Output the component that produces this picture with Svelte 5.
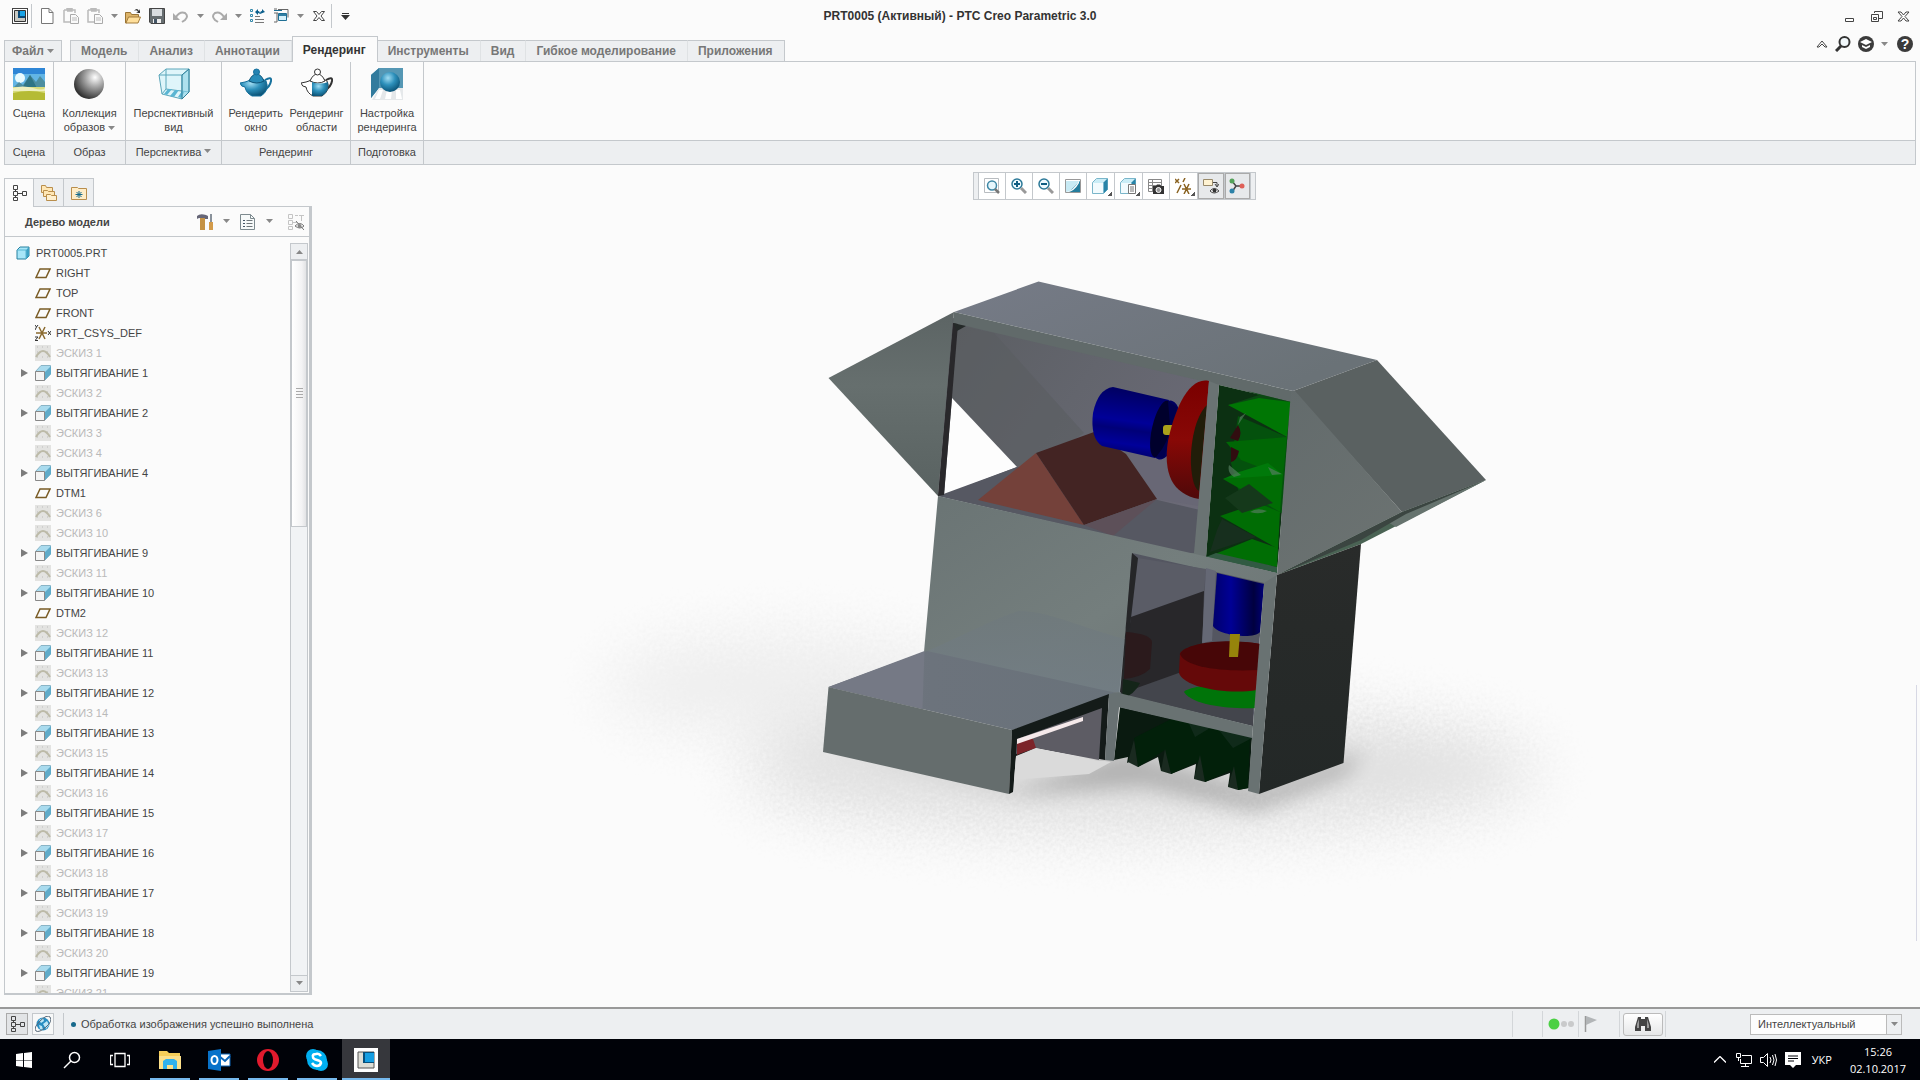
<script>
  const tabs = ['Модель', 'Анализ', 'Аннотации', 'Рендеринг', 'Инструменты', 'Вид', 'Гибкое моделирование', 'Приложения'];
  let activeTab = 'Рендеринг';

  const quick = ['new', 'paste', 'paste', 'caret', 'open', 'save', 'undo', 'caret', 'redo', 'caret', 'regen', 'windows', 'caret', 'closeall'];

  const groups = [
    { id: 'scene', title: 'Сцена', items: [{ icon: 'scene', lines: ['Сцена'] }] },
    { id: 'look', title: 'Образ', items: [{ icon: 'sphere', lines: ['Коллекция', 'образов'], menu: true }] },
    { id: 'persp', title: 'Перспектива', menu: true, items: [{ icon: 'persp', lines: ['Перспективный', 'вид'] }] },
    { id: 'render', title: 'Рендеринг', items: [{ icon: 'teapot', lines: ['Рендерить', 'окно'] }, { icon: 'teapotArea', lines: ['Рендеринг', 'области'] }] },
    { id: 'setup', title: 'Подготовка', items: [{ icon: 'setup', lines: ['Настройка', 'рендеринга'] }] }
  ];

  const viewTools = ['refit', 'zoomin', 'zoomout', 'repaint', 'style', 'saved', 'viewmgr', 'datum', 'annot', 'spin'];

  const sketch = (n) => ({ type: 'sketch', name: 'ЭСКИЗ ' + n });
  const extrude = (n) => ({ type: 'extrude', name: 'ВЫТЯГИВАНИЕ ' + n });
  const plane = (name) => ({ type: 'plane', name });

  const tree = [
    { type: 'part', name: 'PRT0005.PRT' },
    plane('RIGHT'), plane('TOP'), plane('FRONT'),
    { type: 'csys', name: 'PRT_CSYS_DEF' },
    sketch(1), extrude(1), sketch(2), extrude(2), sketch(3), sketch(4), extrude(4),
    plane('DTM1'),
    sketch(6), sketch(10), extrude(9), sketch(11), extrude(10),
    plane('DTM2'),
    sketch(12), extrude(11), sketch(13), extrude(12), sketch(14), extrude(13), sketch(15), extrude(14),
    sketch(16), extrude(15), sketch(17), extrude(16), sketch(18), extrude(17), sketch(19), extrude(18),
    sketch(20), extrude(19), sketch(21)
  ];

  const taskApps = ['explorer', 'outlook', 'opera', 'skype', 'creo'];
</script>

{#snippet icon(name, size = 16)}
  <svg class="icon" width={size} height={size} viewBox="0 0 {size} {size}" aria-hidden="true">
    {#if name === 'creo'}
      <rect x=".5" y=".5" width="15" height="15" fill="#fff" stroke="#444" />
      <path d="M2.500 2.500h11v11h-11z" fill="#c9c9c3" stroke="#333" />
      <path d="M6 3h7v7H6z" fill="#0a4a78" /><path d="M8 3h5v5H8z" fill="#19a3e6" />
    {:else if name === 'new'}
      <path d="M2.500.5h7.500l4 4v11h-11.500z" fill="#fff" stroke="#777" /><path d="M10 .5v4h4" fill="none" stroke="#777" />
    {:else if name === 'paste'}
      <path d="M1 2h11v3M1 2v12h6M4 2V.5h5V3H4" fill="none" stroke="#bbb" stroke-width="1.500" />
      <path d="M7.500 6.500h5l3 3v6h-8z" fill="#fafafa" stroke="#aaa" /><path d="M9 10h5M9 12h5" stroke="#bbb" />
    {:else if name === 'open'}
      <path d="M.5 4.500h5l1 2h7v3H5L1.500 15h-1z" fill="#ddb469" stroke="#9a7434" />
      <path d="M3.500 9h12l-2.500 6H1z" fill="#ffdf9b" stroke="#a37c3c" /><path d="M9 3q3-4 5 0l1-2v4h-4l2-1q-1-3-4-1z" fill="#333" />
    {:else if name === 'save'}
      <path d="M.5.5h15v15H2l-1.500-1.500z" fill="#666d70" stroke="#444" />
      <path d="M3 1h10v7H3z" fill="#d9dde0" /><path d="M4 11h8v4H4z" fill="#eee" /><path d="M5 11h3v4H5z" fill="#456" />
    {:else if name === 'undo'}
      <path d="M3 9q4-6 9-4 4 3 0 7l-3 2" fill="none" stroke="#aaa" stroke-width="2" /><path d="M0 5v7h7z" fill="#aaa" />
    {:else if name === 'redo'}
      <path d="M13 9Q9 3 4 5q-4 3 0 7l3 2" fill="none" stroke="#aaa" stroke-width="2" /><path d="M16 5v7H9z" fill="#aaa" />
    {:else if name === 'regen'}
      <path d="M1.500 1.500h2v2h-2zM1.500 6.500h2v2h-2zM1.500 11.500h2v2h-2z" fill="none" stroke="#38a" />
      <path d="M6 8.500h5M6 11.500h9M6 14.500h9" stroke="#777" /><path d="M6 4l3-3v2q2 0 2 3-1-1-2-1v2zM16 4l-3-3v2q-2 0-2 3z" fill="#0c5f8c" />
    {:else if name === 'windows'}
      <path d="M5 1.500h10v8M1 5h4M1 1h3M1 14h3V5" fill="none" stroke="#666" /><path d="M1 2.500h8M5.500 5.500h8v7h-8z" fill="#d5f1fb" stroke="#1f6f94" /><path d="M6 6h7v2H6z" fill="#2f7fa4" />
    {:else if name === 'closeall'}
      <path d="M2.500 3.500h3l2.500 3 2.500-3h3L10 8l3.500 4.500h-3L8 9.500l-2.500 3h-3L6 8z" fill="#fff" stroke="#444" />
    {:else if name === 'scene'}
      <rect width="32" height="32" fill="#62b5e5" /><path d="M0 0h32v6H0z" fill="#2e86d6" />
      <circle cx="7" cy="10" r="5" fill="#e9fbff" /><path d="M0 20l6-6 4 3 7-10 6 7 4-6 5 6v9H0z" fill="#4d8ea0" /><path d="M8 22l9-15 8 15z" fill="#2f7585" />
      <path d="M0 19h32v7H0z" fill="#d8dc7c" /><path d="M0 20q10-3 20 0t12 0v3H0z" fill="#eef0c0" /><path d="M0 25q16-4 32 0v7H0z" fill="#b5bb34" />
    {:else if name === 'sphere'}
      <circle cx="16" cy="16" r="15" fill="url(#greyBall)" />
    {:else if name === 'persp'}
      <path d="M1 7L8 1h23v23l-7 7L4 26z" fill="#dff5fa" stroke="#5ba6ba" />
      <path d="M1 7h23l7-6M24 7v24M8 1v20l-4 5M8 21l23 3" fill="none" stroke="#5ba6ba" />
      <path d="M10 21l-4 5 3 1 5-6zM17 22l-5 6 4 1 5-7zM24 23l-4 6 3 1 4-7z" fill="#5ab5d3" />
      <path d="M24 7l7-6v23l-7 7z" fill="#8ed3e6" fill-opacity=".6" stroke="#2f7f99" />
    {:else if name === 'teapot' || name === 'teapotArea'}
      <path d="M25 12q7-4 6 1-1 6-7 9" fill="none" stroke={name === 'teapot' ? '#16719d' : '#333'} stroke-width="2" />
      <path d="M8 13q9-6 18 0 4 9-5 15h-9Q6 25 5 19q-4 0-5-4 6-1 8-2z" fill={name === 'teapot' ? 'url(#blueBall)' : '#fff'} stroke={name === 'teapot' ? '#16719d' : '#333'} />
      <path d="M9 13q3-7 7.500-7t7.500 7q-7 4-15 0z" fill={name === 'teapot' ? '#298cb8' : '#fff'} stroke={name === 'teapot' ? '#0e5478' : '#333'} />
      {#if name === 'teapotArea'}<path d="M11 14q8 3 16 0 2 9-6 14h-10z" fill="url(#blueBall)" />{/if}
      <circle cx="16.500" cy="4" r="3" fill={name === 'teapot' ? '#2583b2' : '#fff'} stroke={name === 'teapot' ? '#16719d' : '#333'} />
    {:else if name === 'setup'}
      <path d="M0 7l8-7h24v20H8L0 30z" fill="#5597b4" /><path d="M0 7l8-7v20L0 30z" fill="#327b9d" />
      <path d="M8 20h24v12H1z" fill="#e5e8ea" /><path d="M8 22l-4 9h5l3-9zM16 22l-2 9h6l1-9zM25 22v9h6l-2-9z" fill="#fff" />
      <circle cx="19" cy="14" r="10" fill="url(#blueBall)" />
    {:else if name === 'tree'}
      <path d="M2.500.5h4v4h-4zM2.500 6.500h4v4h-4zM2.500 12.500h4v3h-4zM11.500 6.500h4v4h-4zM7 8.500h4M4.500 5v1M4.500 11v1" fill="none" stroke="#444" />
    {:else if name === 'folders'}
      <path d="M.5.5h4l1 2h6v5H.5z" fill="#ffe7b5" stroke="#b98e4c" /><path d="M2.500 5.500h4l1 1h6v5h-11z" fill="#ffe7b5" stroke="#b98e4c" /><path d="M5.500 9.500h4l1 1h5v5h-10z" fill="#fff0cf" stroke="#b98e4c" />
    {:else if name === 'favorites'}
      <path d="M.5 2.500h6l1 1h8v11H.5z" fill="#ffedc7" stroke="#b98e4c" /><path d="M8 6v7M4.500 9.500h7M5.500 7l5 5M10.500 7l-5 5" stroke="#146a8c" />
    {:else if name === 'tools'}
      <path d="M0 2q3-3 9-1l2 1v3H8L7 4H3q-2 0-3 1z" fill="#667" /><path d="M3 4h5v12H3z" fill="#c59244" /><path d="M13 0h2v8h-2z" fill="#89919a" /><path d="M12 8h4v8h-4z" fill="#d39b4a" />
    {:else if name === 'list'}
      <path d="M.5.5h10l4 4v11H.5z" fill="#f7fafa" stroke="#7d8a8f" /><path d="M10.500.5v4h4" fill="none" stroke="#7d8a8f" />
      <path d="M3 6h2v1H3zM3 9h2v1H3zM3 12h2v1H3z" fill="#456" /><path d="M6.500 6.500h6M6.500 9.500h6M6.500 12.500h6" stroke="#70787c" />
    {:else if name === 'hide'}
      <path d="M.5.5h4v4h-4zM.5 6.500h4v4h-4zM.5 12.500h4v3h-4zM5 8.500h4M7 1.500h3M11 1.500h5M13.500 1v6" fill="none" stroke="#c4c4c4" />
      <path d="M7 12q5-5 9 0-4 4-9 0M8 7l8 9" fill="none" stroke="#777" /><circle cx="11.500" cy="12" r="2" fill="#888" />
    {:else if name === 'part'}
      <path d="M2 5l3-3h9v9l-3 3H2z" fill="#a7e6f8" stroke="#26809f" /><path d="M11 5l3-3v9l-3 3z" fill="#3ca1c4" /><path d="M2 5h9v9" fill="none" stroke="#57b5d2" />
    {:else if name === 'plane'}
      <path d="M1 12.500L5 4h10l-4 8.500z" fill="none" stroke="#7a5c26" stroke-width="1.500" />
    {:else if name === 'csys'}
      <path d="M1 8h11M4 14L10 2M4 2l6 12" stroke="#8a6a2f" stroke-width="1.500" /><path d="M0 0l1.500 2L3 0M1.500 2L0 5M13 6l3 4M16 6l-3 4M0 12h3l-3 3.500h3" fill="none" stroke="#333" />
    {:else if name === 'sketch'}
      <path d="M0 0h16v16H0z" fill="#e3e3e1" /><path d="M2 2h1M7 2h1M12 2h1M2 7h1M12 7h1M2 12h1M7 12h1M12 12h1" stroke="#bbb" /><path d="M1 12q7-12 14 0" fill="none" stroke="#bcbaa8" stroke-width="2" />
    {:else if name === 'extrude'}
      <path d="M.5 6.500L6 .5h9.500V9l-6 6.500z" fill="#a9dbee" stroke="#8ab4c6" /><path d="M10 7l6-6v8l-6 6z" fill="#5fabc9" /><path d="M.5 6.500h9v9h-9z" fill="#f4f4f4" stroke="#888" />
    {:else if name === 'refit'}
      <path d="M.5.5h14v14H.5z" fill="#fff" stroke="#b8bcc0" /><circle cx="8" cy="7.500" r="4.500" fill="#e6f6fc" stroke="#3d87a5" stroke-width="1.500" /><path d="M11 11l4 4" stroke="#777" stroke-width="2.500" />
    {:else if name === 'zoomin' || name === 'zoomout'}
      <circle cx="6" cy="6" r="5" fill="#eefaff" stroke="#2c7998" stroke-width="1.500" /><path d="M10 10l5 5" stroke="#999" stroke-width="3" /><path d="M3 6h6" stroke="#0e5d82" stroke-width="2" />
      {#if name === 'zoomin'}<path d="M6 3v6" stroke="#0e5d82" stroke-width="2" />{/if}
    {:else if name === 'repaint'}
      <path d="M.5 1.500h15v13H.5z" fill="#fff" stroke="#999" /><path d="M1 3h14v11H1z" fill="#c8eaf4" /><path d="M15 3v11H4z" fill="#257d9d" /><path d="M1 14Q8 13 14 3v2Q9 14 2 14z" fill="#fff" />
    {:else if name === 'style' || name === 'saved'}
      <path d="M.5 4.500l4-4h11v11l-4 4H.5z" fill="#caedf7" stroke="#7ab6ca" /><path d="M11.500 4.500l4-4v11l-4 4z" fill="#2884a8" /><path d="M1 5h10v10H1z" fill="#f2fbfe" />
      {#if name === 'saved'}<path d="M8.500 6.500h7v9h-7z" fill="#fff" stroke="#777" /><path d="M10 9h4M10 11h4M10 13h4" stroke="#777" />{/if}
    {:else if name === 'viewmgr'}
      <path d="M.5 1.500h13v12H.5zM.5 4.500h13M.5 7.500h13M.5 10.500h13M4.500 1.500v12" fill="#fff" stroke="#888" /><path d="M5 8h3l1-1.500h3L13 8h3v8H5z" fill="#333" /><circle cx="10.500" cy="12" r="2.500" fill="#999" stroke="#fff" />
    {:else if name === 'datum'}
      <path d="M0 1l4 4M4 1L0 5M10 0L8 4M6 7l-4 8M7 11h9M14 6l-5 10M9 6l5 10" stroke="#8a6322" stroke-width="1.500" />
    {:else if name === 'annot'}
      <path d="M.5 1.500h9v6h-9z" fill="#fff3d2" stroke="#998a6a" /><path d="M10 4.500h4V8M12 6l2 3 2-3" fill="none" stroke="#444" /><path d="M7 13q4-5 9 0-5 4-9 0z" fill="#fff" stroke="#444" /><circle cx="11.500" cy="12.500" r="2" fill="#333" />
    {:else if name === 'spin'}
      <path d="M3 3l4 5-4 6M7 8h6" fill="none" stroke="#444" stroke-width="1.500" /><circle cx="3" cy="3" r="2.500" fill="#54a259" /><circle cx="3" cy="13" r="2.500" fill="#2c82a8" /><circle cx="13" cy="8" r="2.500" fill="#df6058" />
    {:else if name === 'globe'}
      <circle cx="8" cy="8" r="6.500" fill="#278dc2" /><path d="M4 4l4-2 1 3-3 2zM8 8l4-3 2 4-3 4zM4 9l3 1 1 4-3-1z" fill="#bee7f7" /><path d="M1 15Q-2 12 5 5T15 1q3 4-4 10T1 15" fill="none" stroke="#567" />
    {:else if name === 'flag'}
      <path d="M1.500 0v16" stroke="#999" stroke-width="1.500" /><path d="M2 0l11 4-11 5z" fill="#b2b5b7" />
    {:else if name === 'find'}
      <path d="M3 1h3v2h4V1h3l3 10v4h-6v-5H6v5H0v-4z" fill="#444" /><path d="M2 8l2-5v9H2zM12 3l2 6v3h-2z" fill="#999" />
    {/if}
  </svg>
{/snippet}

{#snippet caret()}
  <svg class="caret" width="7" height="5" viewBox="0 0 7 5" aria-hidden="true"><path d="M0 0h7L3.500 4z" /></svg>
{/snippet}

<!-- gradients shared by the ribbon icons -->
<svg class="defs" width="0" height="0" aria-hidden="true">
  <defs>
    <radialGradient id="greyBall" cx=".7" cy=".28" r=".75"><stop offset="0" stop-color="#fff" /><stop offset=".4" stop-color="#aaa" /><stop offset="1" stop-color="#333" /></radialGradient>
    <radialGradient id="blueBall" cx=".4" cy=".3" r=".7"><stop offset="0" stop-color="#a0dcf2" /><stop offset=".5" stop-color="#2d90bb" /><stop offset="1" stop-color="#0d5579" /></radialGradient>
  </defs>
</svg>

<div class="app">
  <header class="titlebar">
    <div class="quick">
      <button class="tool logo" aria-label="Creo">{@render icon('creo')}</button>
      {#each quick as name}
        {#if name === 'caret'}
          <button class="drop" aria-label="Меню">{@render caret()}</button>
        {:else}
          <button class="tool" aria-label={name}>{@render icon(name)}</button>
        {/if}
      {/each}
      <button class="drop customize" aria-label="Настроить">
        <svg width="9" height="7" viewBox="0 0 9 7"><path d="M1 0h7v1H1zM0 2h9L4.500 7z" fill="#333" /></svg>
      </button>
    </div>
    <h1>PRT0005 (Активный) - PTC Creo Parametric 3.0</h1>
    <div class="window-buttons">
      <button aria-label="Свернуть"><svg width="13" height="13"><path d="M2.500 8.500h8v3h-8z" fill="#fff" stroke="#444" /></svg></button>
      <button aria-label="Развернуть"><svg width="13" height="13"><path d="M4.500 3V1.500h8v7H9M1.500 4.500h7v7h-7zM3.500 7.500h3v2h-3z" fill="none" stroke="#444" /></svg></button>
      <button aria-label="Закрыть"><svg width="13" height="13"><path d="M1 2h3l2.500 3L9 2h3L8 6.500l4 4.500H9L6.500 8 4 11H1l4-4.500z" fill="#fff" stroke="#444" /></svg></button>
    </div>
  </header>

  <nav class="tabbar">
    <button class="tab file">Файл {@render caret()}</button>
    <div class="tabs">
      {#each tabs as tab}
        <button class="tab" class:active={tab === activeTab} on:click={() => (activeTab = tab)}>{tab}</button>
      {/each}
    </div>
    <div class="help">
      <button aria-label="Свернуть ленту"><svg width="12" height="8"><path d="M1 7l5-6 5 6H9L6 4 3 7z" fill="#fff" stroke="#444" /></svg></button>
      <button aria-label="Поиск"><svg width="16" height="16"><circle cx="9.500" cy="6" r="5" fill="#f2f8fb" stroke="#333" stroke-width="2" /><path d="M6 10l-5 5" stroke="#333" stroke-width="3" /></svg></button>
      <button aria-label="Обучение"><svg width="16" height="16"><circle cx="8" cy="8" r="8" fill="#3b3b3b" /><path d="M2 6l6-3 6 3-6 3zM4 9l4 2 4-2v2l-4 2-4-2z" fill="#fff" /></svg></button>
      <button aria-label="Меню обучения">{@render caret()}</button>
      <button class="question" aria-label="Справка">?</button>
    </div>
  </nav>

  <section class="ribbon">
    {#each groups as group}
      <div class="group {group.id}">
        <div class="group-body">
          {#each group.items as item}
            <button class="command">
              {@render icon(item.icon, 32)}
              <span class="label">
                {#each item.lines as line, i}
                  <span>{line}{#if item.menu && i === 1}&nbsp;{@render caret()}{/if}</span>
                {/each}
              </span>
            </button>
          {/each}
        </div>
        <div class="group-title">{group.title}{#if group.menu}&nbsp;{@render caret()}{/if}</div>
      </div>
    {/each}
    <div class="group rest"><div class="group-body"></div><div class="group-title"></div></div>
  </section>

  <main>
    <aside>
      <div class="panel-tabs">
        <button class="active" aria-label="Дерево модели">{@render icon('tree')}</button>
        <button aria-label="Папки">{@render icon('folders')}</button>
        <button aria-label="Избранное">{@render icon('favorites')}</button>
        <span></span>
      </div>
      <div class="panel">
        <div class="panel-head">
          <h2>Дерево модели</h2>
          <button aria-label="Настройки">{@render icon('tools')}{@render caret()}</button>
          <button aria-label="Показать">{@render icon('list')}{@render caret()}</button>
          <button class="hide" aria-label="Скрыть">{@render icon('hide')}</button>
        </div>
        <div class="tree">
          <ul>
            {#each tree as node}
              <li class={node.type}>
                {#if node.type === 'extrude'}
                  <button class="expand" aria-label="Развернуть"><svg width="7" height="8"><path d="M0 0l7 4-7 4z" fill="#7c7c7c" /></svg></button>
                {:else if node.type !== 'part'}
                  <span class="expand"></span>
                {/if}
                {@render icon(node.type)}
                <span>{node.name}</span>
              </li>
            {/each}
          </ul>
          <div class="scrollbar">
            <button class="up" aria-label="Вверх">{@render caret()}</button>
            <div class="track"><div class="thumb"><i></i><i></i><i></i><i></i></div></div>
            <button aria-label="Вниз">{@render caret()}</button>
          </div>
        </div>
      </div>
    </aside>

    <section class="viewport">
      <div class="view-tools">
        {#each viewTools as name}
          <button class:pressed={name === 'annot' || name === 'spin'} class:corner={['style', 'saved', 'datum'].includes(name)} aria-label={name}>{@render icon(name)}</button>
        {/each}
      </div>
      <svg class="model" viewBox="312 200 1604 807" preserveAspectRatio="xMidYMin meet" role="img" aria-label="Модель PRT0005">
        <defs>
          <filter id="soft" x="-60%" y="-90%" width="220%" height="280%">
            <feGaussianBlur stdDeviation="32" result="blur" />
            <feTurbulence type="fractalNoise" baseFrequency=".3" numOctaves="2" result="noise" />
            <feDisplacementMap in="blur" in2="noise" scale="50" xChannelSelector="R" yChannelSelector="G" />
          </filter>
          <filter id="near" x="-30%" y="-50%" width="160%" height="200%"><feGaussianBlur stdDeviation="10" /></filter>
          <linearGradient id="wing" x1="0" y1="0" x2="0" y2="1"><stop offset="0" stop-color="#5c6464" /><stop offset=".4" stop-color="#666f6e" /><stop offset="1" stop-color="#596261" /></linearGradient>
          <linearGradient id="roof" x1="0" y1="0" x2="1" y2=".6"><stop offset="0" stop-color="#767b87" /><stop offset="1" stop-color="#6a7277" /></linearGradient>
          <linearGradient id="front" x1="0" y1="0" x2="1" y2="1"><stop offset="0" stop-color="#6a7474" /><stop offset=".5" stop-color="#747e7d" /><stop offset="1" stop-color="#697171" /></linearGradient>
          <linearGradient id="side" x1="0" y1="0" x2=".6" y2="1"><stop offset="0" stop-color="#636b6c" /><stop offset="1" stop-color="#6b7271" /></linearGradient>
          <linearGradient id="back" x1="0" y1="0" x2="1" y2=".6"><stop offset="0" stop-color="#5a5d61" /><stop offset=".5" stop-color="#63656d" /><stop offset="1" stop-color="#6b6a77" /></linearGradient>
          <linearGradient id="motor" x1="0" y1="0" x2="-.15" y2="1"><stop offset="0" stop-color="#000066" /><stop offset=".4" stop-color="#000098" /><stop offset=".52" stop-color="#000078" /><stop offset=".72" stop-color="#00009a" /><stop offset="1" stop-color="#000048" /></linearGradient>
          <linearGradient id="motor2"><stop offset="0" stop-color="#00006c" /><stop offset=".35" stop-color="#000095" /><stop offset=".8" stop-color="#00003f" /><stop offset="1" stop-color="#000078" /></linearGradient>
          <linearGradient id="wheel" x1="0" y1="0" x2="0" y2="1"><stop offset="0" stop-color="#7a0000" /><stop offset=".5" stop-color="#880806" /><stop offset="1" stop-color="#4e0909" /></linearGradient>
          <linearGradient id="dark" x1="0" y1="0" x2="0" y2="1"><stop offset="0" stop-color="#292b2a" /><stop offset="1" stop-color="#232827" /></linearGradient>
          <linearGradient id="stepTop" x1="0" y1="0" x2="1" y2="0"><stop offset="0" stop-color="#757985" /><stop offset=".35" stop-color="#6c737c" /><stop offset="1" stop-color="#69727a" /></linearGradient>
          <linearGradient id="reflection" x1="0" y1="0" x2="0" y2="1"><stop offset="0" stop-color="#6f797c" /><stop offset="1" stop-color="#727d85" /></linearGradient>
        </defs>

        <!-- floor shadow -->
        <ellipse cx="790" cy="685" rx="190" ry="50" fill="#000" opacity=".05" filter="url(#soft)" />
        <ellipse cx="1140" cy="770" rx="400" ry="60" fill="#000" opacity=".11" filter="url(#soft)" />
        <path d="M815 745l200 45 110-40 130 40 110-40-20 26-90 36-110-25-130 8-200-50z" fill="#000" opacity=".2" filter="url(#near)" />

        <!-- upper housing -->
        <path d="M828.500 378L954 312l-1 12-15 172z" fill="url(#wing)" />
        <path d="M954 312l84.500-30.500L1377 360l-84 31z" fill="url(#roof)" />
        <path d="M953 318l266 62-13 177-268-61z" fill="url(#back)" />
        <path d="M994 333l90 100-30 20-37 14-65-70 5-71z" fill="#5a5d61" opacity=".6" />
        <path d="M952 398l65 69-73 28z" fill="#fdfdfd" />
        <path d="M938 496l79-29 183 43-5 45z" fill="#565862" />
        <path d="M1125 450l83 7-4 50-47-8z" fill="#686775" />
        <path d="M954 312l339 79 1 12-75-18-253-59-13-2z" fill="#616a6a" />
        <path d="M953 323l5 1-14 171-6 1z" fill="#29282b" /><path d="M953 323l13 3-9 5z" fill="#252a29" />
        <path d="M978 500l58-47 48 72z" fill="#74413a" />
        <path d="M1036 453l58-21 32 22 31 45-73 26z" fill="#432423" />
        <path d="M1084 525l73-26-44 37z" fill="#5d5059" />

        <!-- horizontal motor with wheel -->
        <ellipse cx="1165" cy="430" rx="14" ry="30" transform="rotate(13 1165 430)" fill="#000060" />
        <path d="M1113 387l56 13-14 58-53-12q-12-8-9-33 5-24 20-26z" fill="url(#motor)" />
        <ellipse cx="1161" cy="429" rx="9" ry="29" transform="rotate(13 1161 429)" fill="#00002c" />
        <path d="M1168 401l9 6-4 22-9 29-8-1q14-16 14-32z" fill="#00004e" />
        <rect x="1163" y="425" width="12" height="10" rx="3" fill="#aaa11a" />
        <path d="M1209 381c-21-5-35 31-41 60-5 32 4 53 31 58z" fill="url(#wheel)" />
        <path d="M1207 405c-12 11-17 40-16 60 1 16 4 24 8 26z" fill="#211d09" />

        <!-- cutter bay -->
        <path d="M1219 385l72 17-14 171-71-16z" fill="#0c3012" />
        <path d="M1247 391l44 11-1 4-62-1 31-10z" fill="#0b4813" />
        <path d="M1238 416l49 21-1 40-4 36-39-5-12-45z" fill="#04510d" />
        <path d="M1228 405l31-7 32 4-4 35z" fill="#007604" />
        <path d="M1226 442l61-5-4 39-6-2-36-14z" fill="#006705" />
        <path d="M1239 472l29-9 15 12-3 3-57 1z" fill="#00790a" />
        <path d="M1223 479l60-4-3 37z" fill="#006d04" />
        <path d="M1220 516l38-13 22 9-2 37z" fill="#006d04" />
        <path d="M1225 498l24-14 24 19-31 10z" fill="#15391b" />
        <path d="M1217 530l5-11 34 18-46 15z" fill="#172f1e" />
        <path d="M1215 554l37-15 26 9-1 19z" fill="#006e04" />
        <path d="M1238 425q5 8 0 16l-8-3zM1231 447l8 4q-2 10-8 11z" fill="#310d10" />
        <path d="M1240 417l6-4-8 12zM1229 465q-2 8 5 12l7-2zM1250 512q7-5 17-1-7 4-17 1zM1268 467l14 7-10 1z" fill="#527c5c" opacity=".7" />
        <path d="M1206 557l10-4 61 14v6z" fill="#315a42" />

        <!-- right nose -->
        <path d="M1293 391l84-31 109 120-84 32z" fill="#5a6161" />
        <path d="M1291 391h4l107 121-125 63z" fill="url(#side)" />
        <path d="M1402 512l84-32-125 64-84 31z" fill="#4a6354" /><path d="M1430 502l56-22-90 47-10-6z" fill="#66736e" />
        <path d="M1277 575l125-63 84-32-80 34-45 26z" fill="#3b4541" />

        <!-- lower body -->
        <path d="M1277 575l84-31-17.500 219L1259 794z" fill="url(#dark)" />
        <path d="M1209 381l10 4-13 172 71 16v3l-13 8-58-14-80-16 68-1z" fill="#6a7373" />
        <path d="M938 496l257 58 82 19-3 14-144 3-11 104-107 36-88-78z" fill="url(#front)" />
        <path d="M927 651c25-10 70-34 92-40 30 0 60 16 106 28l-4 54-85-12z" fill="url(#reflection)" opacity=".8" />

        <!-- window bay -->
        <path d="M1132 553l132 30-11 143-132-32z" fill="#545661" />
        <path d="M1138 558l68 11-2 22-73 26z" fill="#5a5c66" />
        <path d="M1131 617l73-26-3 100-81 3z" fill="#28272a" /><path d="M1132 553l6 5-7 60-8 75-3 1z" fill="#252628" />
        <path d="M1120 694l81-29 52 30v31z" fill="#43454c" />
        <path d="M1126 632q25 2 26 10l-2 27q-8 8-26 10z" fill="#2b1a1c" /><path d="M1123 679l17 4q-5 11-18 16z" fill="#142519" />
        <path d="M1206 568l10 3-4 70-10 2z" fill="#656875" />
        <path d="M1217 573l47 11-4 48c-6 8-43 3-47-6z" fill="url(#motor2)" />
        <path d="M1184 692c5-7 60-12 73-2l-1 18c-25 1-63-2-72-16z" fill="#007409" />
        <path d="M1180 653c8-11 56-14 80-9l-3 46c-31 5-74-3-78-17z" fill="#650909" /><path d="M1180 654c5-12 50-16 80-10l-2 26c-38 2-73-3-78-16z" fill="#470607" />
        <path d="M1230 634h10l-2 23h-9z" fill="#96840b" />

        <!-- lower cutters -->
        <path d="M1120 707L1252 737 1249 788 1238 790 1236 785 1228 787 1230 773 1205 782 1202 777 1194 779 1196 764 1171 774 1168 768 1161 771 1158 757 1138 767 1133 760 1127 763 1128 757 1114 760z" fill="#0a1a10" />
        <path d="M1134 738L1177 716 1250 737 1248 788 1238 790 1231 770 1205 782 1197 762 1171 774 1165 750 1138 767z" fill="#02200a" />
        <path d="M1175 716l12 3 8 18 20-12 18 23 19-10v-3z" fill="#102a1a" />
        <path d="M1134 740l-6 22 10 5zM1165 749l-4 22 10 3zM1200 755l-6 24 11 3zM1234 766l-6 21 10 3z" fill="#1a2a20" />
        <path d="M1119 693l134 33-1 12-134-31z" fill="#697272" />
        <path d="M1264 583l13-8-18 219-11-3z" fill="#697272" />

        <!-- step -->
        <path d="M828.500 687L927 651l194 43-109 36z" fill="url(#stepTop)" />
        <path d="M828.500 687l94 22 2-58z" fill="#757985" />
        <path d="M828.500 687L1012 730l-3 64-186-42z" fill="#656d6d" />
        <path d="M1012 730l97-36-4 66-69-12-20 9-3 35-4 2z" fill="#141b19" />
        <path d="M1017 739l85-31-3 52-63-12-20 6z" fill="#5d5c64" />
        <path d="M1017 755l2-1 17-6-3-9-16 1z" fill="#7c2429" />
        <path d="M1017 739l66-22v4l-66 23z" fill="#f5e9ea" />
        <path d="M1016 756l20-8 63 13h6l6 1-22 12-75 6z" fill="#dadada" />
        <path d="M1109 694l12-2-2 16-5 53-9-1z" fill="#687172" />
      </svg>
    </section>
    <div class="edge"></div>
  </main>

  <footer class="status">
    <button class="pressed" aria-label="Дерево модели">{@render icon('tree')}</button>
    <button aria-label="Браузер">{@render icon('globe')}</button>
    <p class="message">Обработка изображения успешно выполнена</p>
    <div class="cells">
      <span class="cell"></span>
      <span class="cell"><svg width="26" height="12"><circle cx="6" cy="6" r="5.500" fill="#4bd044" /><circle cx="16" cy="6" r="3" fill="#c9cacb" /><circle cx="23" cy="6" r="3" fill="#c9cacb" /></svg></span>
      <span class="cell flag">{@render icon('flag')}</span>
      <span class="cell search"><button aria-label="Найти">{@render icon('find')}</button></span>
      <span class="cell"></span>
    </div>
    <label class="filter">
      <select aria-label="Фильтр выбора"><option>Интеллектуальный</option></select>
      <span class="arrow">{@render caret()}</span>
    </label>
  </footer>

  <div class="taskbar">
    <button class="start" aria-label="Пуск"><svg width="16" height="16"><path d="M0 2l7-1v7H0zM8 1l8-1v8H8zM0 8.500h7V15l-7-1zM8 8.500h8V16l-8-1z" fill="#fff" /></svg></button>
    <button class="start" aria-label="Поиск"><svg width="18" height="18"><circle cx="11.500" cy="6.500" r="5" fill="none" stroke="#fff" stroke-width="1.500" /><path d="M8 10l-7 7" stroke="#fff" stroke-width="1.500" /></svg></button>
    <button class="start" aria-label="Представление задач"><svg width="20" height="16"><path d="M5 1.500h10v13H5zM3 3.500H.5v9H3M17 3.500h2.500v9H17" fill="none" stroke="#fff" stroke-width="1.300" /></svg></button>
    {#each taskApps as app}
      <button class="task" class:current={app === 'creo'} aria-label={app}>
        <svg width="24" height="24" viewBox="0 0 24 24">
          {#if app === 'explorer'}
            <path d="M1 3h8l2 2h11v16H1z" fill="#f6ce59" /><path d="M1 8h22v13H1z" fill="#fce08a" /><path d="M5 21v-8l3-2h8l3 2v8h-4v-4H9v4z" fill="#31b1ec" />
          {:else if app === 'outlook'}
            <path d="M11 6h12v12H11z" fill="#fff" stroke="#0a65b8" /><path d="M12 8l6 5 5-5" fill="none" stroke="#0a65b8" stroke-width="2" /><path d="M1 3l13-2v22L1 21z" fill="#0872c9" /><ellipse cx="7.500" cy="12" rx="3" ry="4" fill="none" stroke="#fff" stroke-width="2" />
          {:else if app === 'opera'}
            <ellipse cx="12" cy="12" rx="11" ry="11" fill="#e11a2d" /><ellipse cx="12" cy="12" rx="5" ry="9" fill="#000208" />
          {:else if app === 'skype'}
            <circle cx="8" cy="8" r="7" fill="#00aff0" /><circle cx="16" cy="16" r="7" fill="#00aff0" /><circle cx="12" cy="12" r="10" fill="#00aff0" />
            <path d="M16 8q-2-3-5-2-4 0-3 3 0 2 4 3t4 3q-1 3-4 3t-5-3" fill="none" stroke="#fff" stroke-width="2.500" />
          {:else}
            <path d="M0 0h24v24H0z" fill="#fff" /><path d="M4 4h16v16H4z" fill="#deded6" stroke="#555" /><path d="M9 4h11v11H9z" fill="#07507c" /><path d="M11 5h9v9h-9z" fill="#159ee2" />
          {/if}
        </svg>
      </button>
    {/each}
    <div class="tray">
      <svg width="12" height="7"><path d="M0 6.500l6-6 6 6" fill="none" stroke="#fff" stroke-width="1.300" /></svg>
      <svg width="16" height="14"><path d="M6 2.500h9.500v8H4.500V6M5 13.500h8M9.500 10.500v3M.5.500h4v4h-4zM2.500 4.500V8" fill="none" stroke="#fff" /></svg>
      <svg width="17" height="14"><path d="M.5 4.500h3l4-4v13l-4-4h-3zM10 4q2 3 0 6M12.500 2q3 5 0 10M15 1q3 6 0 12" fill="none" stroke="#fff" /></svg>
      <svg width="16" height="16"><path d="M0 0h16v13H11l-3 3-3-3H0z" fill="#fff" /><path d="M3 4h10M3 6.500h10M3 9h6" stroke="#000208" /></svg>
      <span class="lang">УКР</span>
      <time><span>15:26</span><span>02.10.2017</span></time>
    </div>
  </div>
</div>

<style>
  :global(body) {
    margin: 0;
    background: #fbfbfb;
  }

  .app {
    --line: #c4c8cc;
    --fill: #edeff1;
    display: flex;
    flex-direction: column;
    height: 100vh;
    font: 11px/14px "Liberation Sans", Arial, sans-serif;
    color: #444;
    background: #fbfbfb;
    overflow: hidden;
  }

  button {
    display: flex;
    align-items: center;
    justify-content: center;
    margin: 0;
    padding: 0;
    border: 0;
    background: none;
    font: inherit;
    color: inherit;
  }

  svg {
    flex: none;
  }

  .defs {
    position: absolute;
  }

  .caret {
    fill: #888;
  }

  .titlebar {
    display: grid;
    grid-template-columns: 1fr auto 1fr;
    align-items: center;
    height: 32px;
  }

  .titlebar h1 {
    margin: 0;
    font-size: 12px;
    color: #333;
  }

  .quick {
    display: flex;
    align-items: center;
    padding-left: 8px;
  }

  .tool {
    width: 24px;
    height: 24px;
  }

  .logo {
    border-right: 1px solid var(--line);
    margin-right: 3px;
  }

  .drop {
    width: 14px;
    height: 24px;
  }

  .customize {
    width: 27px;
    border-left: 1px solid var(--line);
  }

  .window-buttons {
    display: flex;
    justify-content: flex-end;
    gap: 14px;
    padding-right: 10px;
  }

  .tabbar {
    display: flex;
    align-items: flex-end;
    height: 29px;
    padding: 0 4px;
  }

  .tab {
    height: 21px;
    padding: 0 11px 0 10px;
    border-right: 1px solid #dfe2e4;
    border-top: 1px solid var(--line);
    background: var(--fill);
    font-size: 12px;
    font-weight: bold;
    color: #777;
  }

  .tab.file {
    gap: 3px;
    padding: 0 7px;
    border-left: 1px solid var(--line);
    border-right-color: var(--line);
  }

  .tab.active {
    height: 26px;
    margin-bottom: -1px;
    border: 1px solid var(--line);
    border-bottom: 0;
    background: #fbfbfb;
    color: #333;
    z-index: 1;
  }

  .tabs {
    display: flex;
    align-items: flex-end;
    margin-left: 8px;
    border-left: 1px solid var(--line);
    height: 21px;
  }

  .tabs .tab:last-child {
    border-right-color: var(--line);
  }

  .help {
    display: flex;
    align-items: center;
    gap: 7px;
    margin-left: auto;
    padding: 0 3px 9px 0;
  }

  .question {
    width: 16px;
    height: 16px;
    margin-left: 2px;
    border-radius: 50%;
    background: #3b3b3b;
    color: #fff;
    font-size: 14px;
    font-weight: bold;
  }

  .ribbon {
    display: flex;
    height: 102px;
    margin: 0 4px;
    border: 1px solid var(--line);
  }

  .group {
    display: flex;
    flex-direction: column;
    box-sizing: border-box;
    border-right: 1px solid var(--line);
  }

  .scene { width: 49px; }
  .look { width: 72px; }
  .persp { width: 96px; }
  .render { width: 129px; }
  .setup { width: 73px; }

  .rest {
    flex: 1;
    border-right: 0;
  }

  .group-body {
    display: flex;
    justify-content: space-evenly;
    flex: 1;
  }

  .command {
    flex-direction: column;
    justify-content: flex-start;
    gap: 6px;
    padding-top: 6px;
  }

  .label {
    display: flex;
    flex-direction: column;
    white-space: nowrap;
  }

  .group-title {
    display: flex;
    align-items: center;
    justify-content: center;
    height: 21px;
    padding-bottom: 2px;
    border-top: 1px solid var(--line);
    background: var(--fill);
  }

  main {
    display: flex;
    flex: 1;
    min-height: 0;
    padding: 13px 4px 12px;
  }

  aside {
    display: flex;
    flex-direction: column;
    width: 308px;
    flex: none;
  }

  .panel-tabs {
    display: flex;
    height: 29px;
  }

  .panel-tabs button {
    width: 30px;
    box-sizing: border-box;
    border: 1px solid var(--line);
    border-left: 0;
    background: var(--fill);
  }

  .panel-tabs .active {
    border-left: 1px solid var(--line);
    border-bottom: 0;
    background: #fbfbfb;
  }

  .panel-tabs span {
    flex: 1;
    border-bottom: 1px solid var(--line);
  }

  .panel {
    display: flex;
    flex-direction: column;
    flex: 1;
    min-height: 0;
    border: 1px solid var(--line);
    border-top: 0;
    border-right-width: 3px;
    border-bottom-width: 2px;
  }

  .panel-head {
    display: flex;
    align-items: center;
    height: 29px;
    border-bottom: 1px solid var(--line);
    gap: 10px;
    padding: 0 5px 0 20px;
  }

  .panel-head h2 {
    flex: 1;
    margin: 0;
    font-size: 11px;
  }

  .panel-head button {
    gap: 10px;
  }

  .panel-head .hide {
    margin-left: 5px;
  }

  .tree {
    display: flex;
    flex: 1;
    min-height: 0;
    overflow: hidden;
  }

  .tree ul {
    flex: 1;
    margin: 0;
    padding: 6px 0 0;
    list-style: none;
  }

  .tree li {
    display: flex;
    align-items: center;
    gap: 5px;
    height: 20px;
    padding-left: 16px;
  }

  .tree .part {
    padding-left: 10px;
  }

  .tree .sketch {
    color: #b9b9b9;
  }

  .expand {
    width: 9px;
    justify-content: flex-start;
  }

  .scrollbar {
    display: flex;
    flex-direction: column;
    width: 18px;
    margin: 6px 1px 1px 0;
    box-sizing: border-box;
    border: 1px solid var(--line);
  }

  .scrollbar button {
    height: 16px;
    background: var(--fill);
    border-top: 1px solid var(--line);
  }

  .scrollbar .up {
    border: 0;
    border-bottom: 1px solid var(--line);
  }

  .up .caret {
    transform: rotate(180deg);
  }

  .track {
    flex: 1;
    background: #f1f3f5;
  }

  .thumb {
    display: flex;
    flex-direction: column;
    align-items: center;
    justify-content: center;
    gap: 2px;
    height: 37%;
    border: 1px solid var(--line);
    background: linear-gradient(90deg, #fff, #f3f3f4 70%, #e2e3e5);
  }

  .thumb i {
    width: 7px;
    height: 1px;
    background: #aaa;
  }

  .viewport {
    display: flex;
    flex-direction: column;
    align-items: center;
    flex: 1;
    min-width: 0;
    margin-top: -6px;
    margin-bottom: -12px;
  }

  .view-tools {
    display: flex;
    padding: 0 4px;
    border: 1px solid var(--line);
    background: var(--fill);
  }

  .view-tools button {
    width: 27px;
    height: 26px;
    border-left: 1px solid var(--line);
    background: #fff;
  }

  .view-tools button:last-child {
    border-right: 1px solid var(--line);
  }

  .view-tools .corner {
    width: 28px;
    background: linear-gradient(135deg, transparent 50%, #555 50%) right 2px bottom 3px / 4px 4px no-repeat #fff;
  }

  .view-tools .pressed {
    background: #e7e9eb;
    box-shadow: inset 0 0 0 1px #aaa;
  }

  .model {
    width: 100%;
    flex: 1;
    min-height: 0;
  }

  .edge {
    width: 1px;
    height: 256px;
    margin-right: -1px;
    align-self: flex-end;
    margin-bottom: 54px;
    background: #d7d8e4;
  }

  .status {
    display: flex;
    align-items: center;
    height: 30px;
    padding: 0 18px 0 6px;
    border-top: 2px solid #999;
    background: var(--fill);
  }

  .status > button {
    width: 22px;
    height: 22px;
    margin-right: 4px;
    border: 1px solid var(--line);
    background: #f7f8f8;
  }

  .status > .pressed {
    border-color: #aaa;
    background: #e2e4e6;
  }

  .message {
    display: flex;
    align-items: center;
    gap: 5px;
    height: 22px;
    margin: 0 0 0 5px;
    padding-left: 7px;
    border-left: 1px solid var(--line);
  }

  .message::before {
    content: "";
    width: 5px;
    height: 5px;
    border-radius: 50%;
    background: #17698c;
  }

  .cells {
    display: flex;
    align-self: stretch;
    padding: 2px 0;
    margin-left: auto;
  }

  .cell {
    display: flex;
    align-items: center;
    justify-content: center;
    box-sizing: border-box;
    width: 30px;
    border-left: 1px solid #d3d6d9;
  }

  .cell:nth-child(2) { width: 36px; }

  .cell.flag {
    width: 41px;
    justify-content: flex-start;
    padding-left: 5px;
  }

  .cell.search { width: 46px; }

  .cell:last-child { width: 85px; }

  .search button {
    width: 40px;
    height: 23px;
    border: 1px solid #bbb;
    border-radius: 3px;
    background: linear-gradient(#fff, #e6e7e8);
  }

  .filter {
    display: flex;
    width: 152px;
    height: 21px;
    box-sizing: border-box;
    border: 1px solid #bbb;
    background: #fdfdfd;
  }

  .filter select {
    flex: 1;
    padding: 0 7px;
    appearance: none;
    border: 0;
    background: none;
    font: inherit;
    color: inherit;
  }

  .arrow {
    display: flex;
    align-items: center;
    justify-content: center;
    width: 14px;
    border-left: 1px solid #bbb;
    background: var(--fill);
  }

  .taskbar {
    display: flex;
    height: 41px;
    background: #000208;
    color: #fff;
  }

  .start {
    width: 48px;
  }

  .task {
    width: 40px;
    margin: 0 4px 0 5px;
    padding-top: 2px;
    box-sizing: border-box;
    border-bottom: 2px solid #76b9ed;
  }

  .start + .task {
    margin-left: 6px;
  }

  .task.current {
    width: 48px;
    margin: 0 0 0 1px;
    background: #36373c;
  }

  .tray {
    display: flex;
    align-items: center;
    gap: 8px;
    margin-left: auto;
    padding-right: 14px;
    font: 11px/17px "Open Sans", sans-serif;
  }

  .tray > svg:first-child {
    margin-right: 2px;
  }

  .lang {
    padding: 0 10px 0 3px;
  }

  time {
    display: flex;
    flex-direction: column;
    align-items: center;
  }
</style>
